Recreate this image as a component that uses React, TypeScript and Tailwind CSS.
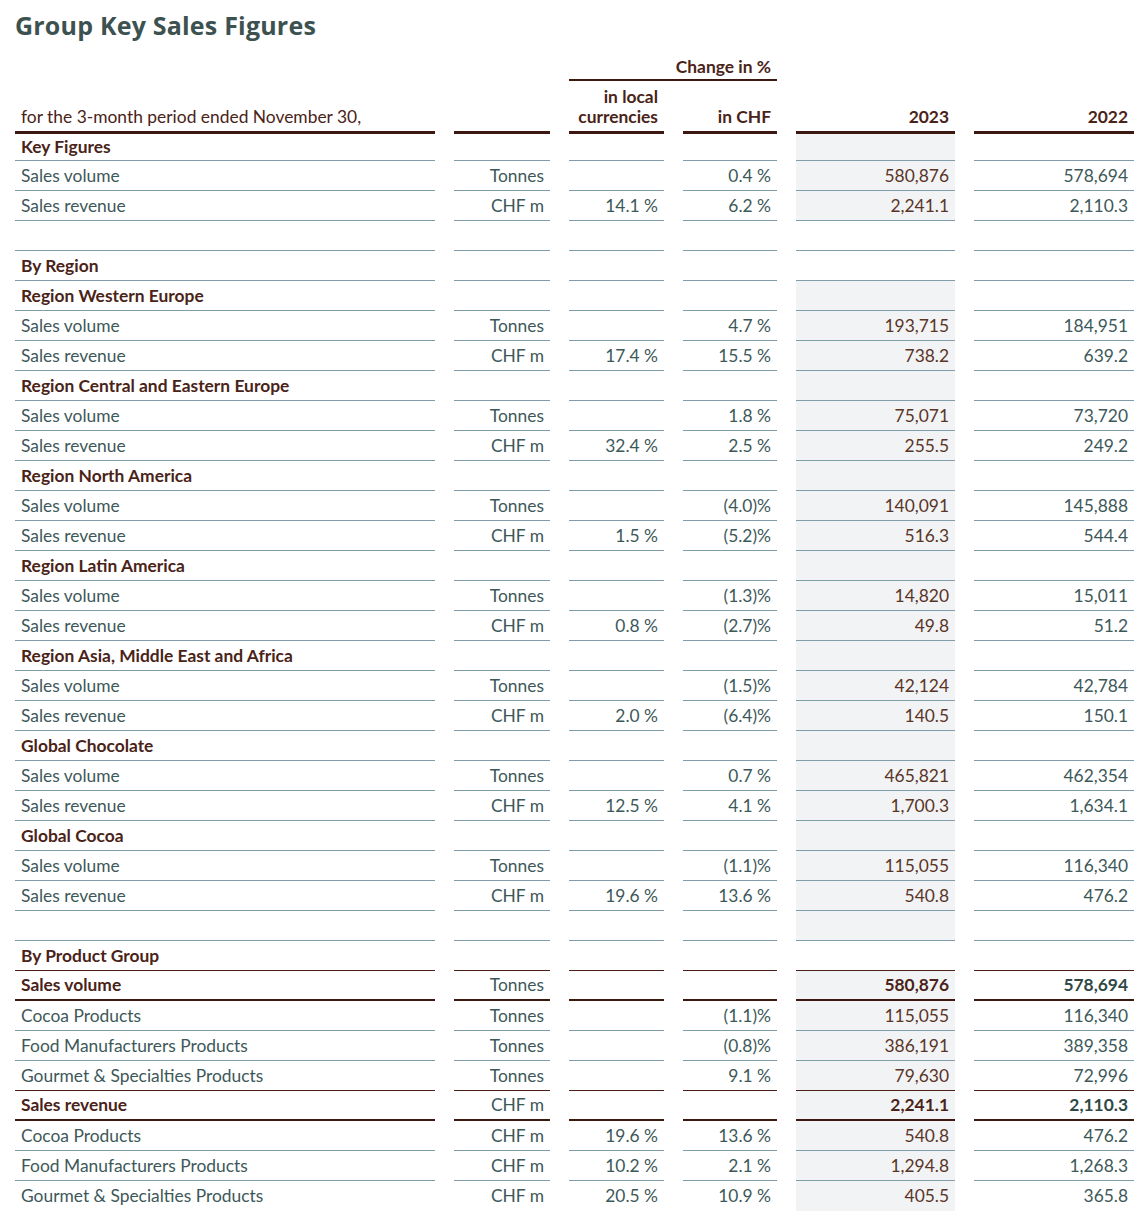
import React from "react";

type Kind = "item" | "section" | "bold" | "empty";
type Border = "thin" | "brown" | "thick" | "none";
type Row = {
  label: string;
  kind: Kind;
  unit?: string;
  local?: string;
  chf?: string;
  y23?: string;
  y22?: string;
  border: Border;
  shade: boolean;
};

const sec = (label: string, shade = true, border: Border = "thin"): Row => ({ label, kind: "section", border, shade });
const vol = (local: string, chf: string, y23: string, y22: string, label = "Sales volume", border: Border = "thin"): Row => ({
  label, kind: "item", unit: "Tonnes", local, chf, y23, y22, border, shade: true,
});
const rev = (local: string, chf: string, y23: string, y22: string, label = "Sales revenue", border: Border = "thin"): Row => ({
  label, kind: "item", unit: "CHF m", local, chf, y23, y22, border, shade: true,
});

const rows: Row[] = [
  sec("Key Figures"),
  vol("", "0.4 %", "580,876", "578,694"),
  rev("14.1 %", "6.2 %", "2,241.1", "2,110.3"),
  { label: "", kind: "empty", border: "thin", shade: false },
  sec("By Region", false),
  sec("Region Western Europe"),
  vol("", "4.7 %", "193,715", "184,951"),
  rev("17.4 %", "15.5 %", "738.2", "639.2"),
  sec("Region Central and Eastern Europe"),
  vol("", "1.8 %", "75,071", "73,720"),
  rev("32.4 %", "2.5 %", "255.5", "249.2"),
  sec("Region North America"),
  vol("", "(4.0)%", "140,091", "145,888"),
  rev("1.5 %", "(5.2)%", "516.3", "544.4"),
  sec("Region Latin America"),
  vol("", "(1.3)%", "14,820", "15,011"),
  rev("0.8 %", "(2.7)%", "49.8", "51.2"),
  sec("Region Asia, Middle East and Africa"),
  vol("", "(1.5)%", "42,124", "42,784"),
  rev("2.0 %", "(6.4)%", "140.5", "150.1"),
  sec("Global Chocolate"),
  vol("", "0.7 %", "465,821", "462,354"),
  rev("12.5 %", "4.1 %", "1,700.3", "1,634.1"),
  sec("Global Cocoa"),
  vol("", "(1.1)%", "115,055", "116,340"),
  rev("19.6 %", "13.6 %", "540.8", "476.2"),
  { label: "", kind: "empty", border: "thin", shade: true },
  sec("By Product Group", false, "brown"),
  { label: "Sales volume", kind: "bold", unit: "Tonnes", local: "", chf: "", y23: "580,876", y22: "578,694", border: "thick", shade: true },
  vol("", "(1.1)%", "115,055", "116,340", "Cocoa Products"),
  vol("", "(0.8)%", "386,191", "389,358", "Food Manufacturers Products"),
  vol("", "9.1 %", "79,630", "72,996", "Gourmet & Specialties Products", "brown"),
  { label: "Sales revenue", kind: "bold", unit: "CHF m", local: "", chf: "", y23: "2,241.1", y22: "2,110.3", border: "thick", shade: true },
  rev("19.6 %", "13.6 %", "540.8", "476.2", "Cocoa Products"),
  rev("10.2 %", "2.1 %", "1,294.8", "1,268.3", "Food Manufacturers Products"),
  rev("20.5 %", "10.9 %", "405.5", "365.8", "Gourmet & Specialties Products", "none"),
];

const borderCls: Record<Border, string> = {
  thin: "border-b border-[#7f9cab]",
  brown: "border-b border-[#4a2018]",
  thick: "border-b-2 border-[#3d1810]",
  none: "",
};

function DataRow({ r, first }: { r: Row; first: boolean }) {
  const b = borderCls[r.border];
  const h = first ? "h-[27px]" : "h-[30px]";
  const bold = r.kind === "bold";
  const labelCls =
    r.kind === "section" || r.kind === "bold"
      ? "font-bold text-[#4a2318]"
      : "text-[#3d5859]";
  const cell = `${h} ${b} flex items-center px-[6px]`;
  return (
    <>
      <div className={`${cell} ${labelCls}`}>{r.label}</div>
      <div className={`${cell} justify-end text-[#3d5859]`}>{r.unit}</div>
      <div className={`${cell} justify-end text-[#3d5859]`}>{r.local}</div>
      <div className={`${cell} justify-end text-[#3d5859]`}>{r.chf}</div>
      <div
        className={`${cell} justify-end ${r.shade ? "bg-[#f2f3f5]" : ""} ${
          bold ? "font-bold text-[#4a2318]" : "text-[#5a3527]"
        }`}
      >
        {r.y23}
      </div>
      <div className={`${cell} justify-end ${bold ? "font-bold text-[#2f4846]" : "text-[#3d5859]"}`}>{r.y22}</div>
    </>
  );
}

export default function App() {
  return (
    <div
      className="w-[1140px] h-[1223px] bg-white pl-[15px]"
      style={{ fontFamily: "Lato, 'Open Sans', sans-serif" }}
    >
      <div className="h-[55px] pt-[9px]">
        <h1 className="text-[25px] leading-[32px] font-bold text-[#3d5250] tracking-[0.2px]" style={{ fontFamily: "'Open Sans', Lato, sans-serif" }}>
          Group Key Sales Figures
        </h1>
      </div>
      <div className="grid grid-cols-[420px_96px_95px_94px_159px_160px] gap-x-[19px] text-[17.4px] leading-[20px]">
        {/* Change in % row */}
        <div className="h-[26px]" />
        <div className="h-[26px]" />
        <div className="col-span-2 h-[26px] border-b-2 border-[#3d1810] flex items-center justify-end px-[6px] font-bold text-[#4a2318]">
          Change in %
        </div>
        <div className="h-[26px]" />
        <div className="h-[26px]" />
        {/* Header row */}
        <div className="h-[53px] border-b-[3px] border-[#3d1810] flex items-end px-[6px] pb-[4px] text-[#4a2318]">
          for the 3-month period ended November 30,
        </div>
        <div className="h-[53px] border-b-[3px] border-[#3d1810]" />
        <div className="h-[53px] border-b-[3px] border-[#3d1810] flex flex-col items-end justify-end px-[6px] pb-[4px] font-bold text-[#4a2318]">
          <span>in local</span>
          <span>currencies</span>
        </div>
        <div className="h-[53px] border-b-[3px] border-[#3d1810] flex items-end justify-end px-[6px] pb-[4px] font-bold text-[#4a2318]">
          in CHF
        </div>
        <div className="h-[53px] border-b-[3px] border-[#3d1810] flex items-end justify-end px-[6px] pb-[4px] font-bold text-[#4a2318]">
          2023
        </div>
        <div className="h-[53px] border-b-[3px] border-[#3d1810] flex items-end justify-end px-[6px] pb-[4px] font-bold text-[#4a2318]">
          2022
        </div>
        {rows.map((r, i) => (
          <DataRow key={i} r={r} first={i === 0} />
        ))}
      </div>
    </div>
  );
}
